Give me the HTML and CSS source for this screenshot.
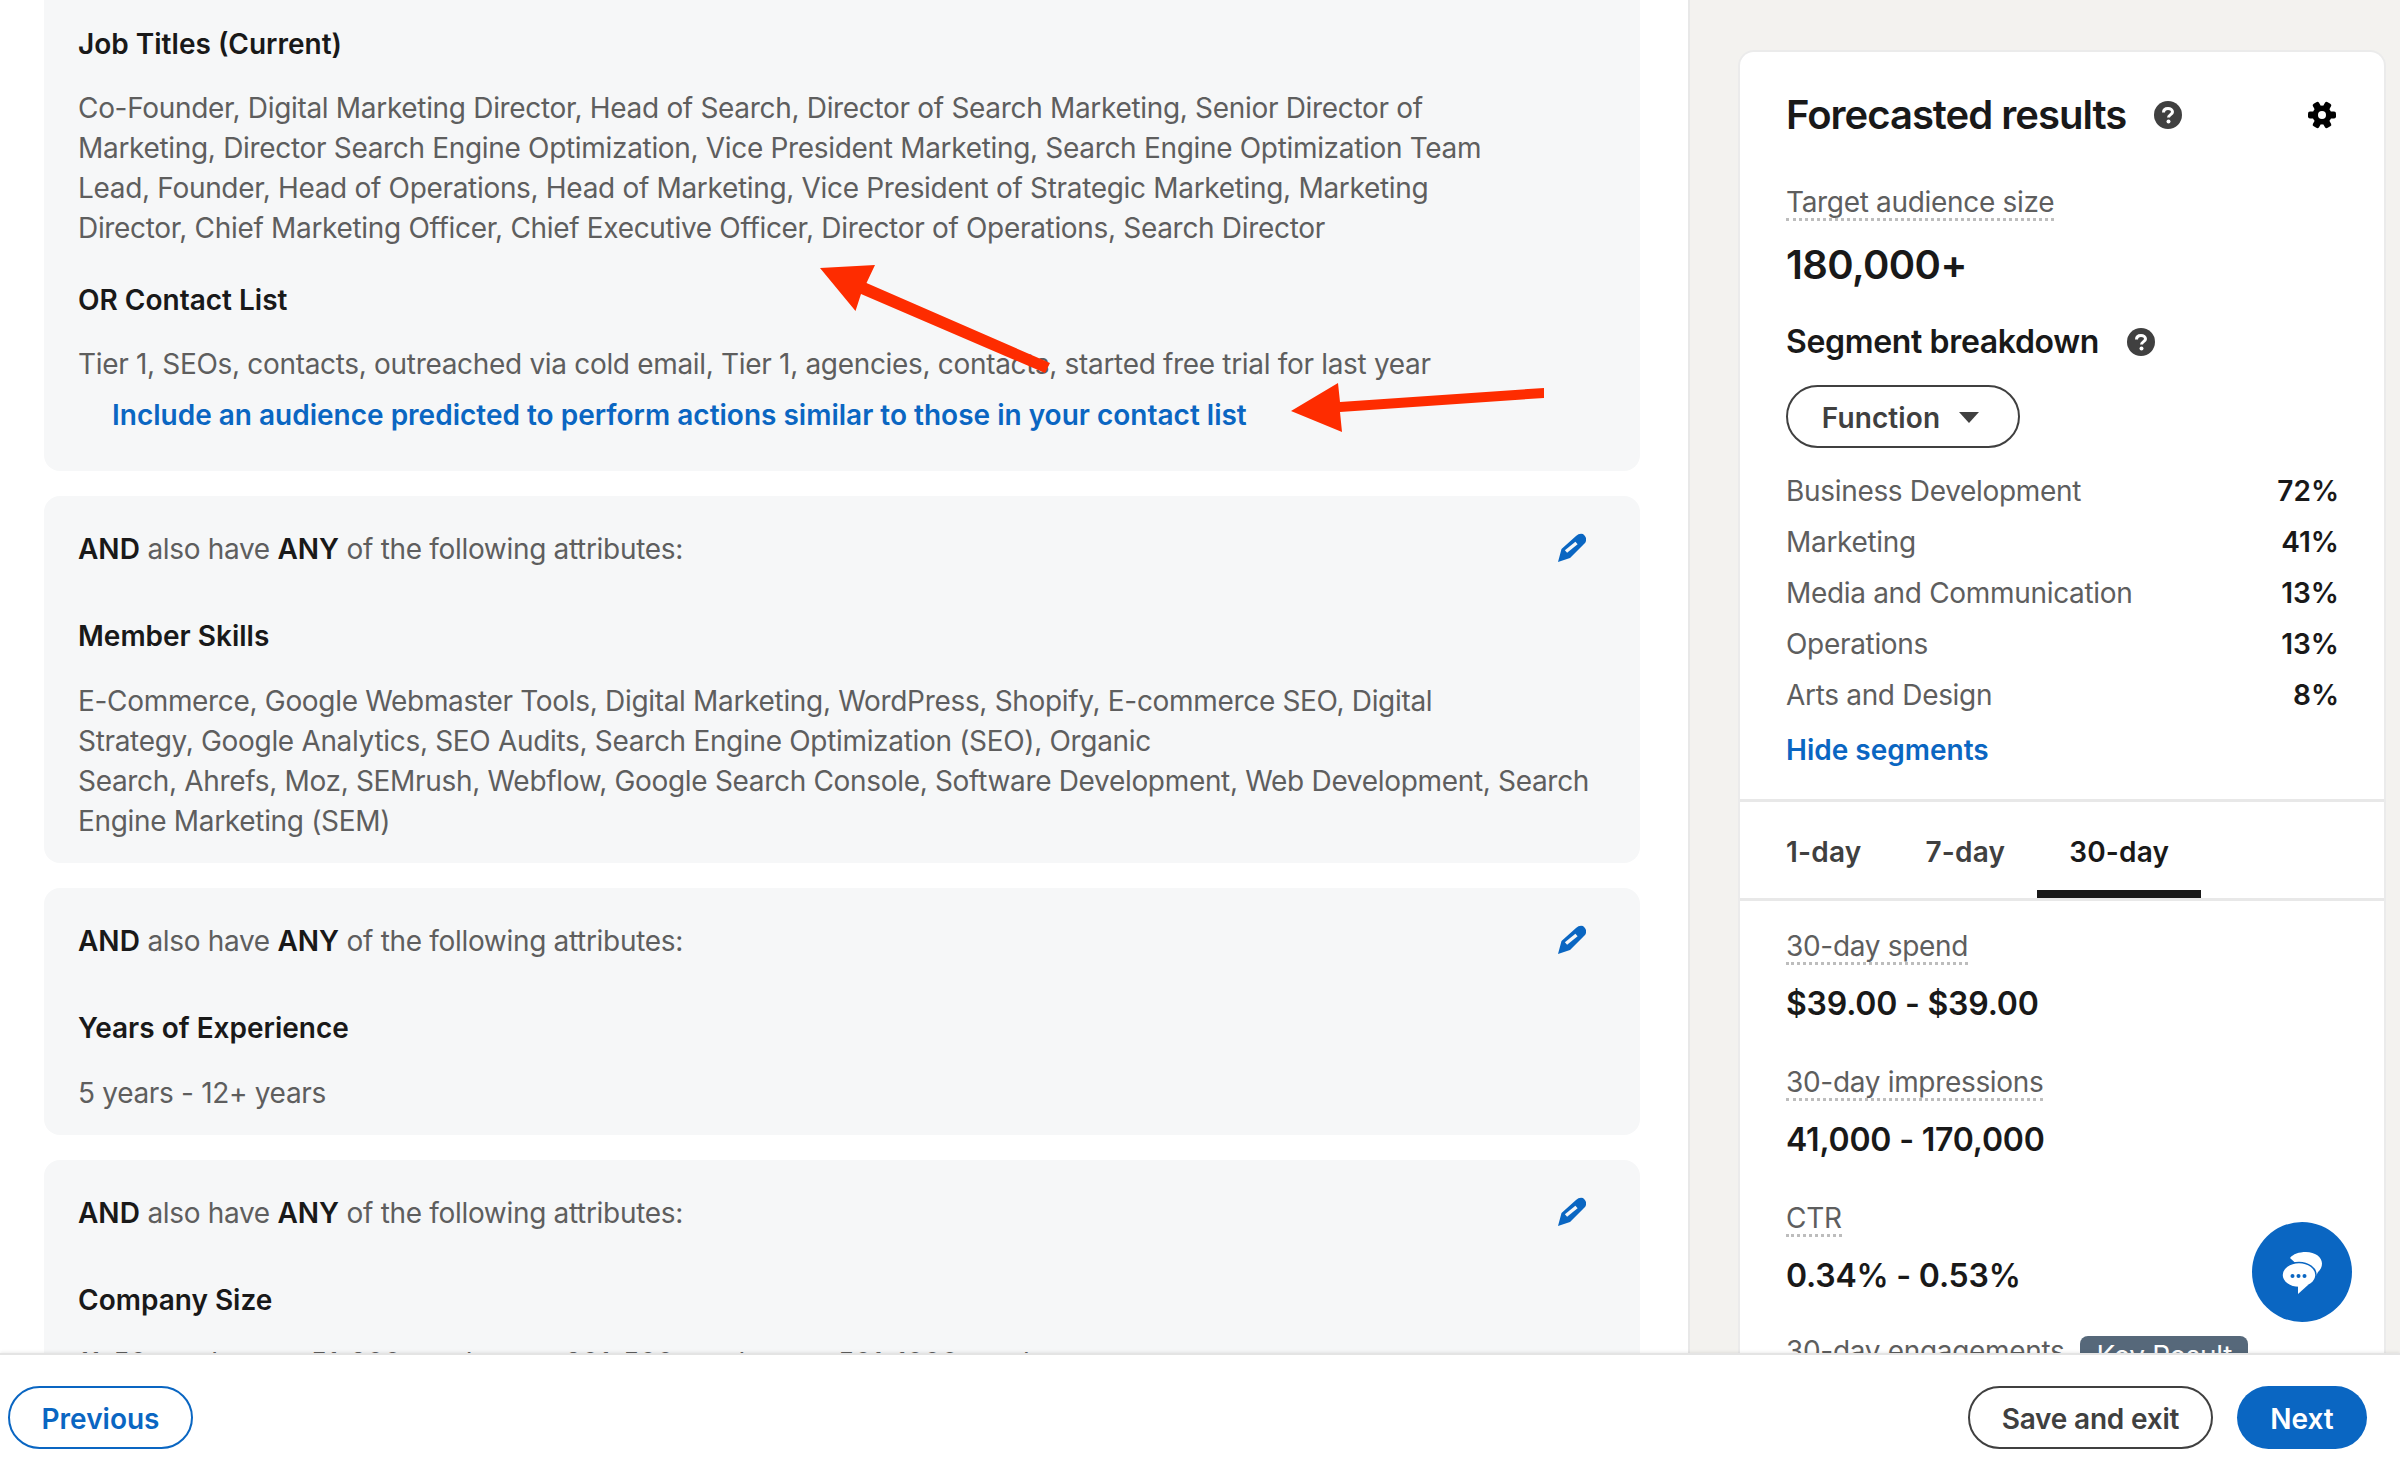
FILE: index.html
```html
<!DOCTYPE html>
<html lang="en">
<head>
<meta charset="utf-8">
<title>Campaign targeting</title>
<link rel="stylesheet" href="styles.css">
</head>
<body>
<div class="page">
  <div class="main">
    <section class="content">
      <div class="list">
        <article class="card card-first">
          <h3 class="label">Job Titles (Current)</h3>
          <p class="values">Co-Founder, Digital Marketing Director, Head of Search, Director of Search Marketing, Senior Director of<br>Marketing, Director Search Engine Optimization, Vice President Marketing, Search Engine Optimization Team<br>Lead, Founder, Head of Operations, Head of Marketing, Vice President of Strategic Marketing, Marketing<br>Director, Chief Marketing Officer, Chief Executive Officer, Director of Operations, Search Director</p>
          <h3 class="label label-or">OR Contact List</h3>
          <p class="values">Tier 1, SEOs, contacts, outreached via cold email, Tier 1, agencies, contacts, started free trial for last year</p>
          <a class="include" href="#">Include an audience predicted to perform actions similar to those in your contact list</a>
        </article>
        <article class="card">
          <div class="card-head">
            <p class="attr"><b>AND</b> also have <b>ANY</b> of the following attributes:</p>
            <svg class="pencil" viewBox="0 0 28 29"><path d="M0 29L3.500 16 18 3Q21 0 25 1 29 4 28 8 27.500 10 26 11L12 25Z" fill="#0a66c2"/><path d="M8 18.500L18.500 10" stroke="#f6f7f8" stroke-width="3.500" fill="none"/></svg>
          </div>
          <h3 class="label">Member Skills</h3>
          <p class="values">E-Commerce, Google Webmaster Tools, Digital Marketing, WordPress, Shopify, E-commerce SEO, Digital<br>Strategy, Google Analytics, SEO Audits, Search Engine Optimization (SEO), Organic<br>Search, Ahrefs, Moz, SEMrush, Webflow, Google Search Console, Software Development, Web Development, Search<br>Engine Marketing (SEM)</p>
        </article>
        <article class="card">
          <div class="card-head">
            <p class="attr"><b>AND</b> also have <b>ANY</b> of the following attributes:</p>
            <svg class="pencil" viewBox="0 0 28 29"><path d="M0 29L3.500 16 18 3Q21 0 25 1 29 4 28 8 27.500 10 26 11L12 25Z" fill="#0a66c2"/><path d="M8 18.500L18.500 10" stroke="#f6f7f8" stroke-width="3.500" fill="none"/></svg>
          </div>
          <h3 class="label">Years of Experience</h3>
          <p class="values">5 years - 12+ years</p>
        </article>
        <article class="card">
          <div class="card-head">
            <p class="attr"><b>AND</b> also have <b>ANY</b> of the following attributes:</p>
            <svg class="pencil" viewBox="0 0 28 29"><path d="M0 29L3.500 16 18 3Q21 0 25 1 29 4 28 8 27.500 10 26 11L12 25Z" fill="#0a66c2"/><path d="M8 18.500L18.500 10" stroke="#f6f7f8" stroke-width="3.500" fill="none"/></svg>
          </div>
          <h3 class="label">Company Size</h3>
          <p class="values values-clipped">11-50 employees, 51-200 employees, 201-500 employees, 501-1000 employees</p>
        </article>
      </div>
    </section>
    <aside class="sidebar">
      <div class="panel">
        <div class="panel-top">
          <div class="title-row">
            <h2 class="title">Forecasted results</h2>
            <svg class="help" viewBox="0 0 28 28"><circle cx="14" cy="14" r="14" fill="#404040"/><path d="M9.500 11.500C9.500 8.800 11.500 7.500 14 7.500S18.500 8.800 18.500 11C18.500 13.500 14.500 13.800 14.500 16.500" fill="none" stroke="#fff" stroke-width="3"/><circle cx="14.500" cy="20.500" r="2" fill="#fff"/></svg>
            <svg class="gear" viewBox="0 0 28 28"><g fill="#000"><circle cx="14" cy="14" r="9.500"/><rect x="0" y="10.500" width="28" height="7" rx="2"/><rect x="0" y="10.500" width="28" height="7" rx="2" transform="rotate(60 14 14)"/><rect x="0" y="10.500" width="28" height="7" rx="2" transform="rotate(120 14 14)"/></g><circle cx="14" cy="14" r="4" fill="#fff"/></svg>
          </div>
          <div class="metric-name-wrap audience"><span class="metric-name">Target audience size</span></div>
          <div class="big-value">180,000+</div>
          <div class="segment-row">
            <h3 class="segment-title">Segment breakdown</h3>
            <svg class="help" viewBox="0 0 28 28"><circle cx="14" cy="14" r="14" fill="#404040"/><path d="M9.500 11.500C9.500 8.800 11.500 7.500 14 7.500S18.500 8.800 18.500 11C18.500 13.500 14.500 13.800 14.500 16.500" fill="none" stroke="#fff" stroke-width="3"/><circle cx="14.500" cy="20.500" r="2" fill="#fff"/></svg>
          </div>
          <button class="btn btn-select">Function<svg class="caret" viewBox="0 0 20 11"><path d="M0 0H20L10 11Z" fill="#404040"/></svg></button>
          <ul class="segments">
            <li><span>Business Development</span><b>72%</b></li>
            <li><span>Marketing</span><b>41%</b></li>
            <li><span>Media and Communication</span><b>13%</b></li>
            <li><span>Operations</span><b>13%</b></li>
            <li><span>Arts and Design</span><b>8%</b></li>
          </ul>
          <a class="hide-link" href="#">Hide segments</a>
        </div>
        <nav class="tabs">
          <span class="tab">1-day</span>
          <span class="tab">7-day</span>
          <span class="tab tab-active">30-day</span>
        </nav>
        <div class="metrics">
          <div class="metric-name-wrap"><span class="metric-name">30-day spend</span></div>
          <div class="metric-value">$39.00 - $39.00</div>
          <div class="metric-name-wrap"><span class="metric-name">30-day impressions</span></div>
          <div class="metric-value">41,000 - 170,000</div>
          <div class="metric-name-wrap"><span class="metric-name">CTR</span></div>
          <div class="metric-value metric-value-last">0.34% - 0.53%</div>
          <div class="metric-name-wrap"><span class="metric-name">30-day engagements</span><span class="badge">Key Result</span></div>
        </div>
      </div>
    </aside>
  </div>
  <footer class="footer">
    <button class="btn btn-prev">Previous</button>
    <div class="footer-right">
      <button class="btn btn-save">Save and exit</button>
      <button class="btn btn-next">Next</button>
    </div>
  </footer>
  <svg class="arrows" viewBox="0 0 2400 1482">
    <polygon points="820,268 875,265 866.500,283 1050,363 1045,373 861,294 855.500,311" fill="#fe2c00"/>
    <polygon points="1291,411 1338,383 1340,402 1544,388 1544,398 1340,412 1342,432" fill="#fe2c00"/>
  </svg>
  <button class="fab" aria-label="Chat">
    <svg viewBox="0 0 100 100"><path d="M54 30C63 30 70 35 70 41.500 70 45 68.500 48 66 50L62 58 38 36C41 32 47 30 54 30Z" fill="#fff"/><ellipse cx="47" cy="53" rx="17" ry="12.500" fill="#fff" stroke="#0a66c2" stroke-width="1.500"/><path d="M46 62V72L56 63Z" fill="#fff"/><circle cx="40.500" cy="54" r="2" fill="#0a66c2"/><circle cx="46.500" cy="54" r="2" fill="#0a66c2"/><circle cx="52.500" cy="54" r="2" fill="#0a66c2"/></svg>
  </button>
</div>
</body>
</html>
```
FILE: styles.css
```css
* { box-sizing: border-box; }
html, body { margin: 0; padding: 0; background: #fff; }
body { font-family: Inter, "Liberation Sans", sans-serif; font-size: 28px; line-height: 40px; color: #191919; }
.page { position: relative; width: 2400px; height: 1482px; overflow: hidden; display: flex; flex-direction: column; }
.main { flex: 1; min-height: 0; display: flex; overflow: hidden; }
.content { width: 1688px; flex: none; padding-left: 44px; overflow: hidden; }
.list { width: 1596px; margin-top: -20px; display: flex; flex-direction: column; gap: 25px; }
.card { background: #f6f7f8; border-radius: 16px; padding: 33px 34px 22px; }
.card-first { padding-top: 44px; padding-bottom: 36px; }
.card-first .label:first-child { margin-bottom: 24px; }
.card-head { display: flex; justify-content: space-between; align-items: center; padding-right: 20px; margin-bottom: 47px; }
.label { margin: 0 0 25px; font-size: 28px; line-height: 40px; font-weight: 600; color: #191919; }
.label-or { margin-top: 32px; margin-bottom: 24px; }
.values, .attr { margin: 0; color: #5e5e5e; letter-spacing: -.32px; white-space: nowrap; }
.values-clipped { margin-top: -2px; }
.attr b { color: #191919; font-weight: 600; letter-spacing: 0; }
.include { display: block; margin: 11px 0 0 34px; color: #0a66c2; font-weight: 600; text-decoration: none; }
.pencil { width: 28px; height: 29px; flex: none; margin-bottom: 4px; }

.sidebar { flex: 1; background: #f3f2ef; border-left: 2px solid #e8e8e8; padding: 50px 14px 0 48px; }
.panel { background: #fff; border: 2px solid #ebebeb; border-bottom: 0; border-radius: 16px 16px 0 0; height: 1400px; }
.panel-top { padding: 25px 45px 29px 46px; border-bottom: 3px solid #e8e8e8; }
.title-row { display: flex; align-items: center; height: 76px; }
.title { margin: 0; font-size: 40px; line-height: 56px; font-weight: 600; letter-spacing: -1px; }
.help { width: 28px; height: 28px; flex: none; margin-left: 28px; }
.gear { width: 28px; height: 28px; flex: none; margin-left: auto; margin-right: 3px; }
.metric-name-wrap { display: flex; align-items: flex-start; height: 40px; }
.metric-name { color: #5e5e5e; border-bottom: 3px dotted #bdbdbd; height: 39px; white-space: nowrap; letter-spacing: -.32px; }
.audience { margin-top: 29px; }
.big-value { margin-top: 23px; font-size: 40px; line-height: 40px; font-weight: 600; letter-spacing: -.6px; }
.segment-row { display: flex; align-items: center; margin-top: 37px; height: 40px; }
.segment-title { margin: 0; font-size: 32px; line-height: 40px; font-weight: 600; letter-spacing: -.35px; }
.btn { font-family: inherit; font-size: 28px; line-height: 40px; font-weight: 600; height: 63px; border-radius: 32px; background: #fff; padding: 2px 0 0; white-space: nowrap; }
.btn-select { display: flex; align-items: center; justify-content: center; gap: 19px; width: 234px; margin-top: 23px; padding-right: 5px; border: 2px solid #404040; color: #404040; letter-spacing: .1px; }
.caret { width: 20px; height: 11px; }
.segments { list-style: none; margin: 23px 0 0; padding: 0; }
.segments li { display: flex; justify-content: space-between; height: 51px; line-height: 41px; color: #5e5e5e; }
.segments span { letter-spacing: -.32px; }
.segments b { color: #191919; font-weight: 600; }
.hide-link { display: block; margin-top: 4px; color: #0a66c2; font-weight: 600; text-decoration: none; }
.tabs { display: flex; padding-left: 14px; height: 99px; border-bottom: 3px solid #e8e8e8; }
.tab { padding: 30px 32px 0; height: 96px; font-weight: 600; color: #404040; white-space: nowrap; letter-spacing: .2px; }
.tab-active { color: #191919; border-bottom: 8px solid #191919; }
.metrics { padding: 25px 44px 0 46px; }
.metric-value { font-size: 32px; line-height: 40px; font-weight: 600; margin-top: 18px; margin-bottom: 38px; letter-spacing: -.2px; }
.metric-value-last { margin-bottom: 35px; }
.badge { margin-left: 16px; margin-top: 5px; background: #56687a; color: #fff; border-radius: 8px 8px 0 0; line-height: 40px; height: 40px; padding: 0 16px; letter-spacing: -.32px; white-space: nowrap; }

.footer { position: relative; height: 129px; flex: none; background: #fff; border-top: 2px solid #e4e4e4; padding: 31px 33px 0 8px; display: flex; justify-content: space-between; align-items: flex-start; box-shadow: 0 -1px 3px rgba(0,0,0,.08); }
.footer-right { display: flex; gap: 24px; }
.btn-prev { width: 185px; border: 2px solid #0a66c2; color: #0a66c2; }
.btn-save { width: 245px; border: 2px solid #404040; color: #404040; letter-spacing: -.2px; }
.btn-next { width: 130px; border: 0; background: #0a66c2; color: #fff; }
.arrows { position: absolute; left: 0; top: 0; width: 2400px; height: 1482px; pointer-events: none; }
.fab { position: absolute; left: 2252px; top: 1222px; width: 100px; height: 100px; border: 0; border-radius: 50%; background: #0a66c2; padding: 0; }
.fab svg { display: block; width: 100px; height: 100px; }
```
